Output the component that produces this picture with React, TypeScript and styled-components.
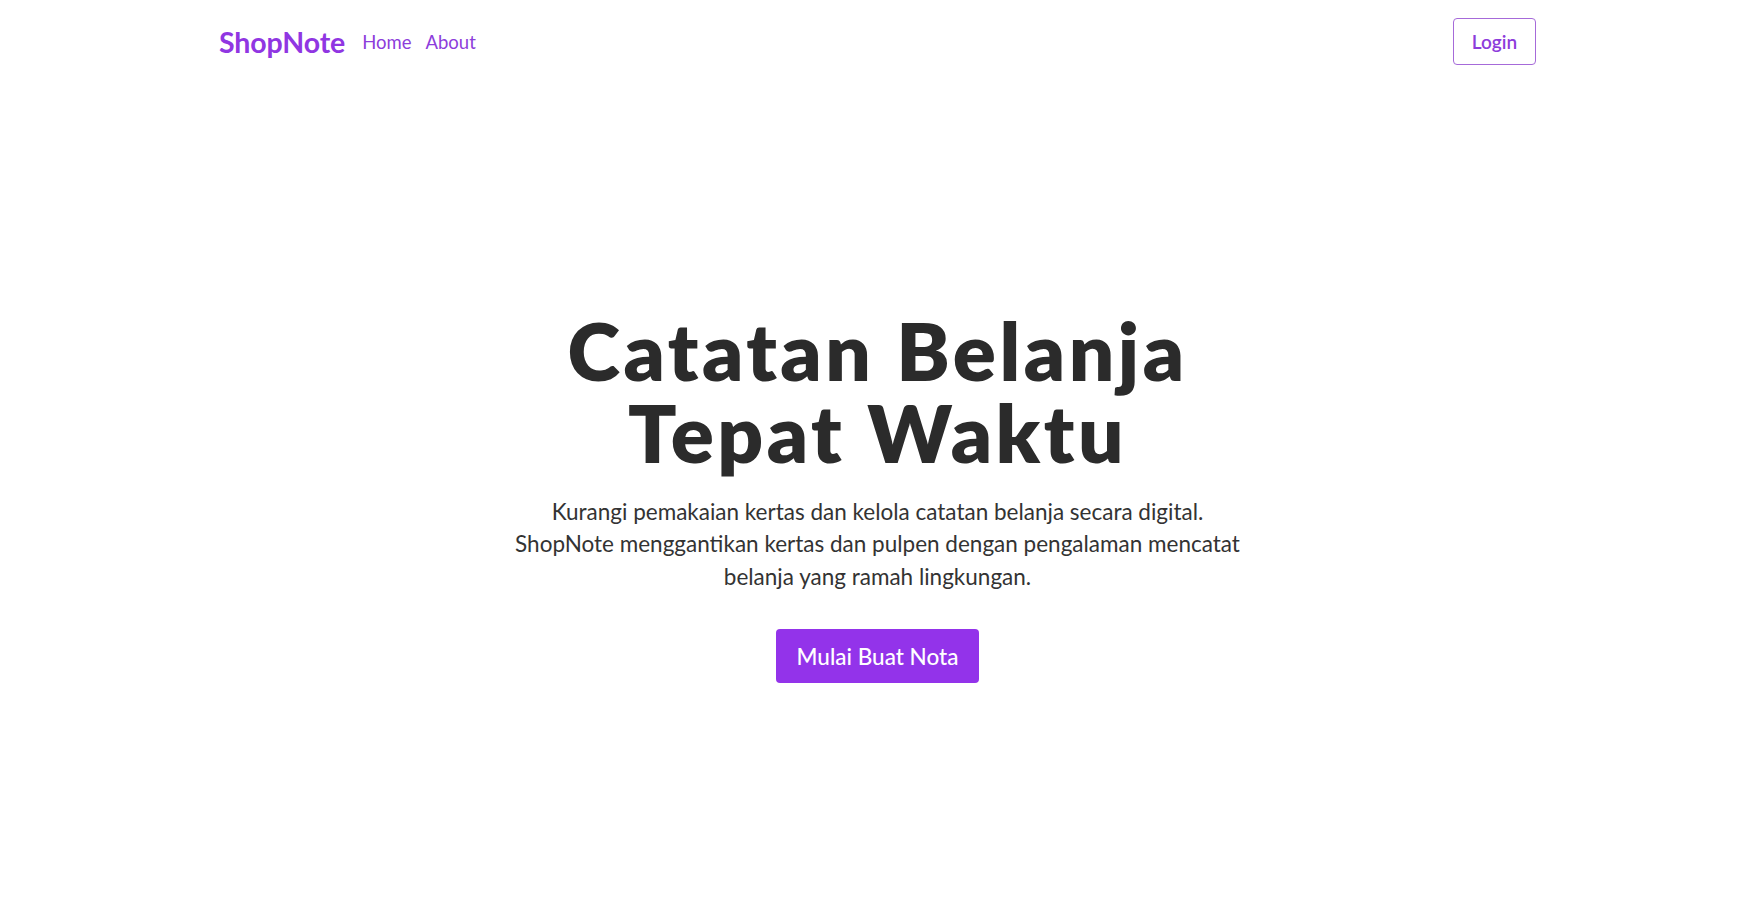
import React from "react";
import styled, { createGlobalStyle } from "styled-components";

const Global = createGlobalStyle`
  html, body { margin: 0; padding: 0; background: #ffffff; }
  body { font-family: "Lato", "Inter", sans-serif; color: #2b2b2b; }
  * { box-sizing: border-box; }
`;

const Page = styled.div`
  min-height: 100vh;
  display: flex;
  flex-direction: column;
`;

const Nav = styled.nav`
  height: 83px;
  display: flex;
  justify-content: center;
  align-items: center;
`;

const NavInner = styled.div`
  width: 1317px;
  display: flex;
  align-items: center;
  justify-content: space-between;
`;

const Left = styled.div`
  display: flex;
  align-items: center;
  gap: 17px;
`;

const Brand = styled.a`
  font-size: 28.5px;
  font-weight: 700;
  color: #9036e2;
  text-decoration: none;
  letter-spacing: -0.1px;
`;

const Links = styled.div`
  display: flex;
  align-items: center;
  gap: 14px;
`;

const NavLink = styled.a`
  font-size: 18.5px;
  font-weight: 400;
  color: #8d3ddb;
  text-decoration: none;
`;

const LoginButton = styled.button`
  width: 83px;
  height: 47px;
  border: 1px solid #a66ad9;
  border-radius: 4px;
  background: #fff;
  color: #8d3ddb;
  font-family: inherit;
  font-size: 19px;
  font-weight: 600;
  cursor: pointer;
`;

const Hero = styled.main`
  flex: 1;
  display: flex;
  flex-direction: column;
  align-items: center;
  justify-content: center;
  text-align: center;
  padding-top: 5.5px;
`;

const Title = styled.h1`
  margin: 0;
  display: flex;
  flex-direction: column;
  align-items: center;
  font-size: 80px;
  font-weight: 800;
  color: #2b2b2b;
  letter-spacing: 3.5px;
`;

const TitleLine = styled.span`
  display: block;
  line-height: 82px;
`;

const Lead = styled.p`
  margin: 22.5px 0 0;
  font-size: 22.5px;
  line-height: 32.5px;
  color: #333;
`;

const CTA = styled.button`
  margin-top: 36px;
  width: 203px;
  height: 54px;
  border: none;
  border-radius: 4px;
  background: #9333ea;
  color: #ffffff;
  font-family: inherit;
  font-size: 22.5px;
  font-weight: 500;
  cursor: pointer;
`;

export default function App() {
  return (
    <Page>
      <Global />
      <Nav>
        <NavInner>
          <Left>
            <Brand href="#">ShopNote</Brand>
            <Links>
              <NavLink href="#">Home</NavLink>
              <NavLink href="#">About</NavLink>
            </Links>
          </Left>
          <LoginButton>Login</LoginButton>
        </NavInner>
      </Nav>
      <Hero>
        <Title>
          <TitleLine>Catatan Belanja</TitleLine>
          <TitleLine>Tepat Waktu</TitleLine>
        </Title>
        <Lead>
          Kurangi pemakaian kertas dan kelola catatan belanja secara digital.
          <br />
          ShopNote menggantikan kertas dan pulpen dengan pengalaman mencatat
          <br />
          belanja yang ramah lingkungan.
        </Lead>
        <CTA>Mulai Buat Nota</CTA>
      </Hero>
    </Page>
  );
}
